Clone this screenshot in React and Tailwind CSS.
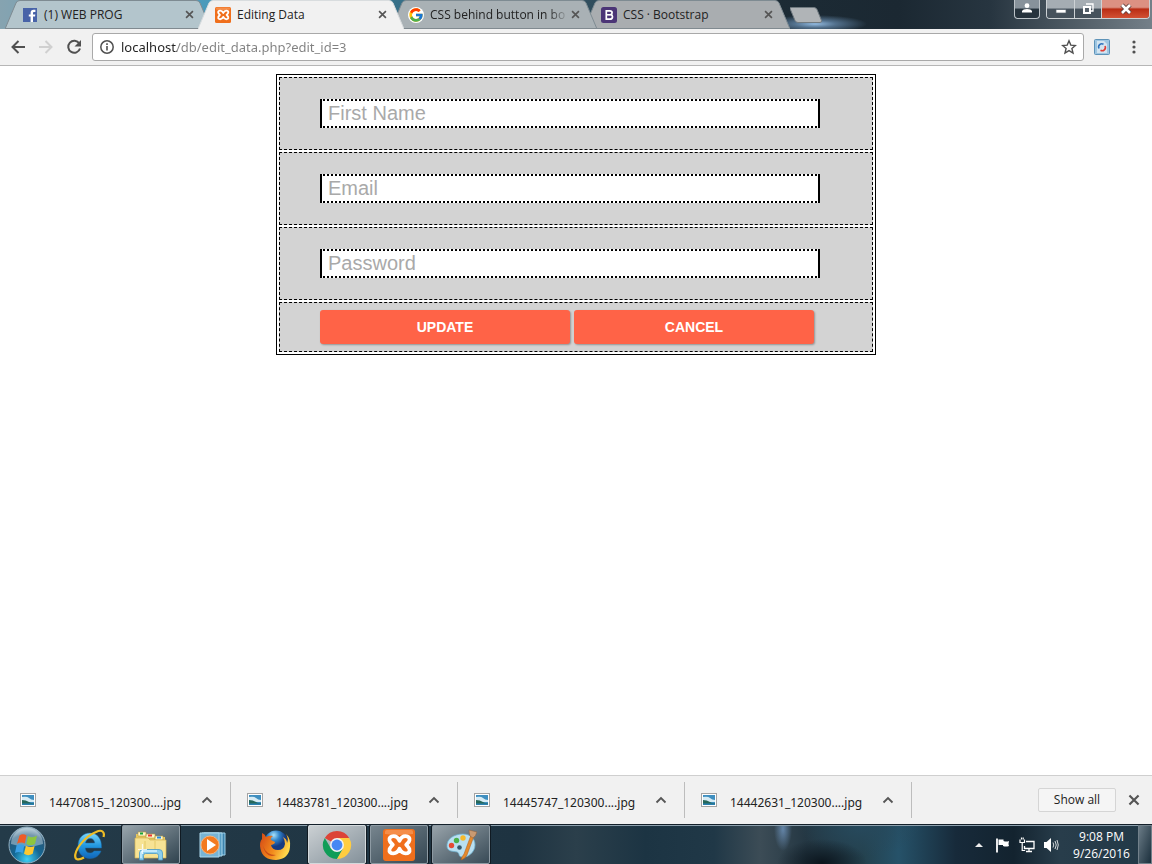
import React from 'react';
import { FcGoogle } from 'react-icons/fc';

function FacebookIcon() {
  return (
    <svg viewBox="0 0 16 16" className="size-4" aria-hidden="true">
      <rect x="1" y="1" width="14" height="14" fill="#4863a8" />
      <path d="M8.6 15V9.6H6.8V7.4h1.8V5.8c0-2 1.1-3 3-3h1.8v2.1h-1.2c-.9 0-1.2.4-1.2 1.2v1.3h2.3l-.3 2.2h-2V15z" fill="#fff" />
    </svg>
  );
}

function XamppIcon({ className }) {
  return (
    <svg viewBox="0 0 32 32" className={className} aria-hidden="true">
      <rect width="32" height="32" rx="3" fill="#f06f1c" />
      <path d="M2 3a2 2 0 0 1 2-2h24a2 2 0 0 1 2 2v2Q16 7 2 5z" fill="#f9a469" opacity=".6" />
      <path
        d="M16.500 11.800C15 8.500 13 7.200 10.500 7.200C7.500 7.200 6 8.800 6.500 11.200C6.800 13 8.200 14 9.800 15.800C8.200 17.600 6.800 18.600 6.500 20.400C6 22.900 7.500 24.400 10.500 24.400C13 24.400 15 23.100 16.500 19.800C18 23.100 20 24.400 22.500 24.400C25.500 24.400 27 22.900 26.500 20.400C26.200 18.600 24.800 17.600 23.200 15.800C24.800 14 26.200 13 26.500 11.200C27 8.800 25.500 7.200 22.500 7.200C20 7.200 18 8.500 16.500 11.800z"
        fill="none" stroke="#fff" strokeWidth="3.800" strokeLinejoin="round"
      />
    </svg>
  );
}

function BootstrapIcon() {
  return (
    <svg viewBox="0 0 16 16" className="size-4" aria-hidden="true">
      <rect width="16" height="16" rx="2.500" fill="#4b3576" />
      <path d="M5.300 3.800h3.500c1.500 0 2.300.7 2.300 1.900 0 .9-.5 1.500-1.200 1.900 1 .3 1.600 1 1.600 2.100 0 1.600-1.200 2.500-2.900 2.500H5.300z" fill="none" stroke="#fff" strokeWidth="1.700" />
      <path d="M5.500 7.800H9.500" stroke="#fff" strokeWidth="1.600" />
    </svg>
  );
}

function CloseIcon({ className }) {
  return (
    <svg viewBox="0 0 10 10" className={className} aria-hidden="true">
      <path d="M1.200 1.200l7.600 7.600M8.800 1.200L1.200 8.800" stroke="currentColor" strokeWidth="1.800" />
    </svg>
  );
}

const TABS = [
  { title: '(1) WEB PROG', icon: <FacebookIcon />, fill: '#b3c5cc', layer: 'z-0' },
  { title: 'Editing Data', icon: <XamppIcon className="size-4" />, fill: '#f1f1f1', layer: 'z-20', active: true },
  {
    title: 'CSS behind button in bo',
    icon: <span className="flex size-4 items-center justify-center rounded-full bg-white"><FcGoogle className="size-4" /></span>,
    fill: '#a9b1b5',
    layer: 'z-10',
    fade: true,
  },
  { title: 'CSS · Bootstrap', icon: <BootstrapIcon />, fill: '#a9adb0', layer: 'z-0' },
];

function Tab({ tab }) {
  return (
    <div className={`relative -ml-[13px] flex h-[29px] w-[206px] min-w-0 items-center pr-[13px] pl-[17px] ${tab.layer}`}>
      <svg viewBox="0 0 206 29" preserveAspectRatio="none" className="absolute inset-0 size-full" aria-hidden="true">
        <path d="M0 29L11 3Q12 .5 15 .5H191Q194 .5 195 3L206 29z" fill={tab.fill} />
        <path d="M0 29L11 3Q12 .5 15 .5H191Q194 .5 195 3L206 29" fill="none" stroke={tab.active ? '#d8dcde' : '#7e8b92'} />
        {!tab.active && <path d="M0 28.500H206" stroke="#808a90" />}
      </svg>
      <a href="#tab" className="relative flex min-w-0 flex-1 items-center gap-[6px] pt-px text-[12px] leading-4 text-[#222]">
        <span className="shrink-0">{tab.icon}</span>
        <span className={`min-w-0 flex-1 whitespace-nowrap ${tab.fade ? 'mask-r-from-85%' : ''}`}>{tab.title}</span>
      </a>
      <button type="button" aria-label="Close tab" className="relative shrink-0 py-1 pr-1 pl-[2px] text-[#555]">
        <CloseIcon className="size-[9px]" />
      </button>
    </div>
  );
}

function TitleBar() {
  return (
    <header className="flex h-[29px] shrink-0 justify-between overflow-hidden bg-[radial-gradient(ellipse_52px_9px_at_815px_24px,#91b9df_0%,#52708c_40%,transparent_100%),linear-gradient(90deg,#86a3b0_0%,#69a3bb_8%,#4a9abb_18%,#37718a_34%,#304e5e_51%,#1c2b35_67%,#1b2832_78%,#273540_86%,#59656e_95%,#748089_100%)] font-['Open_Sans','Noto_Sans',sans-serif]">
      <nav aria-label="Tabs" className="flex min-w-0 pl-[18px]">
        {TABS.map((tab) => <Tab key={tab.title} tab={tab} />)}
        <button type="button" aria-label="New tab" className="mt-[7px] h-4 w-8 shrink-0">
          <svg viewBox="0 0 32 16" className="size-full" aria-hidden="true">
            <path d="M0 1.500Q-.5.500 1.500.5H24Q26 .5 27 2.500L31.500 13.500Q32 15.500 30 15.500H8Q6 15.500 5 13.500z" fill="#b0b4b7" stroke="#707a80" />
          </svg>
        </button>
      </nav>
      <div className="flex items-start gap-[6px] pr-[2px]">
        <button type="button" aria-label="Profile" className="flex h-[19px] w-[26px] justify-center rounded-b border border-t-0 border-[#bcc3c8] bg-linear-to-b from-[#87929b] from-45% to-[#26333d] to-50% pt-[3px]">
          <svg viewBox="0 0 10 10" className="size-[10px]" aria-hidden="true">
            <circle cx="5" cy="2.700" r="2.400" fill="#fff" />
            <path d="M0 9.500V8Q1 6 5 6t5 2v1.500z" fill="#fff" />
          </svg>
        </button>
        <div className="flex h-[19px] overflow-hidden rounded-b border border-t-0 border-[#cdd2d5]">
          <button type="button" aria-label="Minimize" className="flex w-[28px] items-center justify-center border-r border-[#cdd2d5] bg-linear-to-b from-[#a5adb3] from-45% to-[#46525c] to-50%">
            <svg viewBox="0 0 12 12" className="size-3" aria-hidden="true"><path d="M1 6.500h10V10H1z" fill="#fff" stroke="#56616b" strokeWidth=".7" /></svg>
          </button>
          <button type="button" aria-label="Restore" className="flex w-[27px] items-center justify-center border-r border-[#cdd2d5] bg-linear-to-b from-[#a5adb3] from-45% to-[#46525c] to-50%">
            <svg viewBox="0 0 12 12" className="size-3" aria-hidden="true">
              <path d="M4 1h7v7H9" fill="none" stroke="#fff" strokeWidth="1.300" />
              <path d="M2 4h6v6H2z" fill="#56616b" stroke="#fff" strokeWidth="2" />
            </svg>
          </button>
          <button type="button" aria-label="Close" className="flex w-[47px] items-center justify-center bg-linear-to-b from-[#dc9182] from-40% via-[#b92c13] via-50% to-[#d25033]">
            <svg viewBox="0 0 12 12" className="size-3" aria-hidden="true">
              <path d="M2 2l8 8M10 2l-8 8" stroke="#5f403d" strokeWidth="4.500" />
              <path d="M2 2l8 8M10 2l-8 8" stroke="#fff" strokeWidth="2.600" />
            </svg>
          </button>
        </div>
      </div>
    </header>
  );
}

function Toolbar() {
  return (
    <div className="flex h-[37px] shrink-0 items-center border-b border-[#b6b6b6] bg-[#f1f1f1] pl-[10px] text-[#505050]">
      <div className="flex gap-3">
        <button type="button" aria-label="Back">
          <svg viewBox="0 0 16 16" className="size-4" aria-hidden="true"><path d="M15 8H2.500M8.500 2L2.500 8l6 6" fill="none" stroke="currentColor" strokeWidth="2" /></svg>
        </button>
        <button type="button" aria-label="Forward" className="text-[#d0d0d0]">
          <svg viewBox="0 0 16 16" className="size-4" aria-hidden="true"><path d="M1 8h12.500M7.500 2l6 6-6 6" fill="none" stroke="currentColor" strokeWidth="2" /></svg>
        </button>
        <button type="button" aria-label="Reload">
          <svg viewBox="0 0 16 16" className="size-4" aria-hidden="true">
            <path d="M13.300 4.500A6 6 0 1 0 14 9.500" fill="none" stroke="currentColor" strokeWidth="2" />
            <path d="M15 1v6.500H8.500z" fill="currentColor" />
          </svg>
        </button>
      </div>
      <div className="ml-[10px] flex h-7 flex-1 items-center rounded-[3px] border border-[#a9a9a9] bg-white pr-[6px] pl-[7px]">
        <svg viewBox="0 0 14 14" className="size-[14px]" aria-hidden="true">
          <circle cx="7" cy="7" r="6.200" fill="none" stroke="currentColor" strokeWidth="1.500" />
          <path d="M6.200 6h1.600v4.500H6.200zM6.200 3.300h1.600v1.600H6.200z" fill="currentColor" />
        </svg>
        <input
          type="text"
          aria-label="Address"
          defaultValue="localhost/db/edit_data.php?edit_id=3"
          className="ml-[7px] min-w-0 flex-1 bg-linear-to-r from-[#222] from-[56px] to-[#808080] to-[56px] bg-clip-text font-['Noto_Sans','Open_Sans',sans-serif] text-[13px] leading-5 text-transparent outline-none"
        />
        <button type="button" aria-label="Bookmark">
          <svg viewBox="0 0 16 16" className="size-4" aria-hidden="true">
            <path d="M8 1.800l1.800 4.300 4.600.4-3.500 3 1.100 4.500L8 11.600 4 14l1.100-4.500-3.500-3 4.600-.4z" fill="none" stroke="currentColor" strokeWidth="1.400" />
          </svg>
        </button>
      </div>
      <button type="button" aria-label="Extension" className="ml-[10px]">
        <svg viewBox="0 0 16 16" className="size-4" aria-hidden="true">
          <rect x=".5" y=".5" width="15" height="15" rx="1" fill="#9ec6e2" stroke="#5e93b8" />
          <path d="M3 2h7l3 3v9H3z" fill="#d3e4f0" />
          <path d="M9.500 5.300A3.200 3.200 0 0 0 5 9.500" fill="none" stroke="#2f73bd" strokeWidth="1.600" />
          <path d="M6.500 11.200A3.200 3.200 0 0 0 11 7" fill="none" stroke="#e23c35" strokeWidth="1.600" />
        </svg>
      </button>
      <button type="button" aria-label="Menu" className="mr-[10px] ml-4">
        <svg viewBox="0 0 16 16" className="size-4" aria-hidden="true">
          <circle cx="8" cy="3" r="1.600" fill="currentColor" /><circle cx="8" cy="8" r="1.600" fill="currentColor" /><circle cx="8" cy="13" r="1.600" fill="currentColor" />
        </svg>
      </button>
    </div>
  );
}

const FIELDS = [
  { label: 'First Name', type: 'text' },
  { label: 'Email', type: 'email' },
  { label: 'Password', type: 'password' },
];

function EditForm() {
  return (
    <main className="min-h-0 flex-1 overflow-hidden bg-white px-2 pt-2 font-['Liberation_Sans',Arial,sans-serif]">
      <form className="mx-auto max-w-[600px]" onSubmit={(e) => e.preventDefault()}>
        <table className="w-full border-separate border-spacing-[2px] border border-black">
          <tbody>
            {FIELDS.map((field) => (
              <tr key={field.label}>
                <td className="border border-dashed border-black bg-[#d3d3d3] py-[21px] pr-10 pl-10">
                  <input
                    type={field.type}
                    aria-label={field.label}
                    placeholder={field.label}
                    className="block h-[29px] w-full max-w-[500px] border-2 border-black bg-white px-[6px] text-[20px] leading-6 [border-style:dotted_solid] placeholder:text-[#a9a9a9]"
                  />
                </td>
              </tr>
            ))}
            <tr>
              <td className="border border-dashed border-black bg-[#d3d3d3] py-[7px] pr-10 pl-10">
                <div className="flex gap-1 text-[14px] font-bold text-white">
                  <button type="submit" className="h-[34px] w-[250px] rounded-[3px] bg-[#ff6347] shadow-[1px_1px_2px_rgba(0,0,0,0.3)]">UPDATE</button>
                  <button type="button" className="h-[34px] w-[240px] rounded-[3px] bg-[#ff6347] shadow-[1px_1px_2px_rgba(0,0,0,0.3)]">CANCEL</button>
                </div>
              </td>
            </tr>
          </tbody>
        </table>
      </form>
    </main>
  );
}

const DOWNLOADS = ['14470815_120300....jpg', '14483781_120300....jpg', '14445747_120300....jpg', '14442631_120300....jpg'];

function DownloadShelf() {
  return (
    <section aria-label="Downloads" className="flex h-[49px] shrink-0 items-center border-t border-[#cfcfcf] bg-[#f1f1f1] pl-1 font-['Noto_Sans','Open_Sans',sans-serif] text-[12px] text-[#222]">
      {DOWNLOADS.map((name) => (
        <div key={name} className="flex h-9 w-[227px] min-w-0 items-center border-r border-[#bdbdbd] pr-[17px] pl-4">
          <svg viewBox="0 0 16 14" className="h-[14px] w-4 shrink-0" aria-hidden="true">
            <rect x=".5" y=".5" width="15" height="13" fill="#fff" stroke="#a3a3a3" />
            <path d="M2 2h12v10H2z" fill="#3f8fc0" />
            <path d="M2 4q5-1 7 1t5 2v2H2z" fill="#d5ebf4" />
            <path d="M2 7q4 0 7 2t5 1v2H2z" fill="#26685b" />
            <path d="M2 10.500h12V12H2z" fill="#2a80b1" />
          </svg>
          <a href="#download" className="ml-[13px] flex-1 pt-[5px] whitespace-nowrap">{name}</a>
          <button type="button" aria-label={`Options for ${name}`} className="text-[#555]">
            <svg viewBox="0 0 12 12" className="size-3" aria-hidden="true"><path d="M1.500 8.500L6 4l4.500 4.500" fill="none" stroke="currentColor" strokeWidth="1.800" /></svg>
          </button>
        </div>
      ))}
      <button type="button" className="ml-auto h-6 w-[78px] rounded-[2px] border border-[#d5d5d5] bg-[#f5f5f5] font-['Open_Sans','Noto_Sans',sans-serif]">Show all</button>
      <button type="button" aria-label="Close downloads" className="mr-[12px] ml-[12px] text-[#555]">
        <CloseIcon className="size-3" />
      </button>
    </section>
  );
}

function StartOrb() {
  return (
    <svg viewBox="0 0 38 38" className="size-[38px]" aria-hidden="true">
      <defs>
        <radialGradient id="orb" cx=".5" cy=".9" r=".85">
          <stop offset="0" stopColor="#3fd0f5" /><stop offset=".45" stopColor="#136794" /><stop offset=".8" stopColor="#2a5878" /><stop offset="1" stopColor="#9db7c6" />
        </radialGradient>
      </defs>
      <circle cx="19" cy="19" r="18" fill="url(#orb)" stroke="#92b0c2" />
      <path d="M3 18A16 16 0 0 1 35 18Q19 23 3 18z" fill="#d2e4ee" opacity=".45" />
      <path d="M11.500 9.500Q15 7 18.500 9.500L16.800 17.500Q13 15.500 9 17.800z" fill="#ef5b26" />
      <path d="M20 10Q24 12.500 29 9.800L27 18Q22.500 20.500 18.300 18z" fill="#8dc63f" />
      <path d="M8.600 19.300Q12.500 17 16.400 19.300L14.600 27Q11 25 7 27z" fill="#3ba0e6" />
      <path d="M17.900 19.800Q22 22.300 26.600 20L24.700 27.800Q20 30.500 16 27.800z" fill="#fdc82f" />
    </svg>
  );
}

function ExplorerE() {
  return (
    <svg viewBox="0 0 32 32" className="size-8" aria-hidden="true">
      <defs><linearGradient id="ie" x2="0" y2="1"><stop stopColor="#7ed8fb" /><stop offset=".5" stopColor="#2298e0" /><stop offset="1" stopColor="#1266b9" /></linearGradient></defs>
      <path fillRule="evenodd" d="M17 4C9.500 4 5 9.500 5 17s5 12.500 12 12.500c5.500 0 9.500-3 11-7.500h-7c-1 1.500-2.300 2-4 2-3 0-4.500-2-4.700-5h16.200C29 10 24.500 4 17 4zm-4.500 10c.5-2.700 2-4.500 4.700-4.500s4.300 1.800 4.500 4.500z" fill="url(#ie)" stroke="#1b6aa8" strokeWidth=".5" />
      <path d="M30.500 8C32 3 29 0 23 3 14 6.500 4 17 2.300 25.500 1.500 30.500 5 32 11 28.500" fill="none" stroke="#f0bd25" strokeWidth="2.200" />
    </svg>
  );
}

function FolderIcon() {
  return (
    <svg viewBox="0 0 34 32" className="h-8 w-[34px]" aria-hidden="true">
      <path d="M2 5h12l2 3h15v20H2z" fill="#e6c75f" />
      <path d="M4 3h8v4H4zM12 5h9v4h-9zM21 7h8v4h-8z" fill="#fff6c8" stroke="#b99b3c" strokeWidth=".6" />
      <path d="M6 3.500h3v2H6z" fill="#17a53b" /><path d="M14 5.500h4v2h-4z" fill="#e33" /><path d="M23 7.500h4v2h-4z" fill="#258be0" />
      <path d="M1 9h13l2 2h16v18H1z" fill="#f7e395" stroke="#d2b250" strokeWidth=".7" />
      <path d="M11 12v12M21 12v12" stroke="#e3c965" />
      <path d="M5.500 31V24q0-3.500 3.500-3.500h16q3.500 0 3.500 3.500v7h-4v-4.500q0-2-2-2H11.500q-2 0-2 2V31z" fill="#8bcdec" stroke="#4b9bc8" strokeWidth=".8" />
      <path d="M7 29V24q0-2 2.500-2H23" fill="none" stroke="#d8f4ff" strokeWidth="1.300" />
      <path d="M8.500 15v10M4 20.500h9" stroke="#fff" strokeWidth="1.200" opacity=".8" />
    </svg>
  );
}

function MediaIcon() {
  return (
    <svg viewBox="0 0 28 28" className="size-7" aria-hidden="true">
      <path d="M5 2h21v22H5z" fill="#3c83ad" stroke="#9cd0ea" /><path d="M3 2h20v23H3z" fill="#589fc6" stroke="#a9d8ee" />
      <path d="M1 2h19v24H1z" fill="#77b4d5" stroke="#add8ec" />
      <circle cx="11" cy="14" r="9" fill="#f37a1f" stroke="#f9b177" />
      <path d="M8 8l9 6-9 6z" fill="#fff" />
    </svg>
  );
}

function FirefoxIcon() {
  return (
    <svg viewBox="0 0 32 32" className="size-8" aria-hidden="true">
      <defs>
        <radialGradient id="globe" cx=".4" cy=".2"><stop stopColor="#a8e2fa" /><stop offset=".5" stopColor="#2f83c9" /><stop offset="1" stopColor="#173a81" /></radialGradient>
        <linearGradient id="fox" x2="1" y2=".4"><stop stopColor="#d34616" /><stop offset=".6" stopColor="#f28b1c" /><stop offset="1" stopColor="#ffd64a" /></linearGradient>
      </defs>
      <circle cx="17" cy="13" r="11.500" fill="url(#globe)" />
      <path d="M3 4q3 1 4 4 4-2 7-1-3 2-2 4l4 2q0 2-4 3 1 5 7 5 6 0 7-6 0-4-2-7 4 2 4 6 2-4-1-9 5 5 4 13-1 12-14 13Q4 31 1.500 20 0 13 3 10z" fill="url(#fox)" />
      <path d="M4 17q3 9 13 9-10 4-13-9z" fill="#b93416" opacity=".7" />
    </svg>
  );
}

function ChromeIcon() {
  return (
    <svg viewBox="0 0 32 32" className="size-[30px]" aria-hidden="true">
      <path d="M16 16L3.010 8.500A15 15 0 0 1 29 8.500H16z" fill="#dc4437" />
      <path d="M3 8.500A15 15 0 0 0 16 31l6.500-11.250L9.500 19.750z" fill="#109d58" />
      <path d="M16 8.500H29A15 15 0 0 1 16 31l6.500-11.250z" fill="#ffcd40" />
      <circle cx="16" cy="16" r="7.400" fill="#f3f3f3" /><circle cx="16" cy="16" r="5.800" fill="#4688f4" />
    </svg>
  );
}

function PaintIcon() {
  return (
    <svg viewBox="0 0 32 32" className="size-8" aria-hidden="true">
      <path d="M2 18C1 10 9 5 18 5c8 0 12 5 12 11 0 7-7 13-13 12-4 0-2-4-5-5-4-1-9 0-10-5z" fill="#b9dff1" stroke="#6daecc" strokeWidth=".8" />
      <circle cx="6.500" cy="16.500" r="2.700" fill="#e44b35" /><circle cx="11.500" cy="11.500" r="2.700" fill="#4bb04b" /><circle cx="18" cy="9" r="2.700" fill="#f6b92b" /><circle cx="14.500" cy="18.500" r="2.300" fill="#37586a" />
      <path d="M16 31q1-4 3-6L26 6l3 1-7 19q-2 4-6 5z" fill="#e58a2d" stroke="#a65a1c" strokeWidth=".5" />
      <path d="M25 7q-1-3-1-6l8 2q-1 4-4 6z" fill="#c99a72" stroke="#8d5c38" strokeWidth=".5" />
    </svg>
  );
}

const APPS = [
  { name: 'Internet Explorer', icon: <ExplorerE />, frame: 'border-transparent' },
  { name: 'Explorer', icon: <FolderIcon />, frame: 'border-[#8d9aa3] bg-linear-to-br from-[#99a5ac] to-[#30434f] shadow-[0_0_0_1px_#101a22]' },
  { name: 'Media Player', icon: <MediaIcon />, frame: 'border-transparent' },
  { name: 'Firefox', icon: <FirefoxIcon />, frame: 'border-transparent' },
  { name: 'Chrome', icon: <ChromeIcon />, frame: 'border-[#d3d9dc] bg-linear-to-br from-[#cbd0d3] to-[#84919a] shadow-[0_0_0_1px_#101a22]' },
  { name: 'XAMPP', icon: <XamppIcon className="size-8" />, frame: 'border-[#8d9aa3] bg-linear-to-br from-[#77858e] to-[#354753] shadow-[0_0_0_1px_#101a22]' },
  { name: 'Paint', icon: <PaintIcon />, frame: 'border-[#8d9aa3] bg-linear-to-br from-[#98a3aa] to-[#394b57] shadow-[0_0_0_1px_#101a22]' },
];

function Taskbar() {
  return (
    <footer className="flex h-10 shrink-0 items-stretch overflow-hidden border-t border-[#14202a] bg-[radial-gradient(ellipse_9px_22px_at_783px_4px,#6485a8,transparent),radial-gradient(ellipse_45px_24px_at_822px_38px,#0b151d,transparent),radial-gradient(ellipse_60px_30px_at_860px_2px,#27495c,transparent),linear-gradient(90deg,#243b49_0%,#1e3341_45%,#2b3f4b_50%,#1c3443_56%,#203847_62%,#3c4c56_66%,#243743_70%,#24424f_75%,#265269_78%,#172a3a_83%,#13232f_88%,#283d4b_92%,#223947_100%)] font-['Open_Sans','Noto_Sans',sans-serif] text-white shadow-[inset_0_1px_0_#8da0ad]">
      <button type="button" aria-label="Start" className="flex w-[54px] items-center justify-center">
        <StartOrb />
      </button>
      <nav aria-label="Taskbar" className="ml-[6px] flex gap-1">
        {APPS.map((app) => (
          <button key={app.name} type="button" aria-label={app.name} className={`flex w-[58px] items-center justify-center rounded-[2px] border ${app.frame}`}>
            {app.icon}
          </button>
        ))}
      </nav>
      <div className="ml-auto flex items-center gap-2">
        <button type="button" aria-label="Show hidden icons" className="mr-1">
          <svg viewBox="0 0 8 8" className="size-2" aria-hidden="true"><path d="M0 6l4-4 4 4z" fill="#eee" /></svg>
        </button>
        <svg viewBox="0 0 16 16" className="size-4" role="img" aria-label="Action Center">
          <path d="M2 1.500v14" stroke="#fff" strokeWidth="1.800" /><path d="M3.500 2.500h5v1.500q3 1 5.500 0-1 3 0 5-3 1-6 0V8h-4.500z" fill="#fff" />
        </svg>
        <svg viewBox="0 0 16 16" className="size-4" role="img" aria-label="Network">
          <path d="M7 4.500h8v7H5.500V9M7 14.500h6M10 12v2" fill="none" stroke="#fff" strokeWidth="1.300" /><path d="M1 2.500v3h4.500v-3M2.500.5v2M4.200.5v2M3.200 6v7.500h3" fill="none" stroke="#fff" strokeWidth="1.200" />
        </svg>
        <svg viewBox="0 0 16 16" className="size-4" role="img" aria-label="Volume">
          <path d="M1 5h2.500L8 1v14l-4.500-4H1z" fill="#fff" /><path d="M10 5.500q1.500 2.500 0 5M12 4q2.500 4 0 8M14 3q2.500 5 0 10" fill="none" stroke="#fff" strokeWidth=".8" />
        </svg>
        <time className="ml-[6px] block w-[57px] text-center text-[12px] leading-[17px] whitespace-nowrap">9:08 PM<br />9/26/2016</time>
        <button type="button" aria-label="Show desktop" className="h-full w-[14px] border border-[#71808a] bg-linear-to-br from-[#6a7b86] to-[#1c303d]" />
      </div>
    </footer>
  );
}

export default function App() {
  return (
    <div className="flex h-screen flex-col overflow-hidden">
      <TitleBar />
      <Toolbar />
      <EditForm />
      <DownloadShelf />
      <Taskbar />
    </div>
  );
}
